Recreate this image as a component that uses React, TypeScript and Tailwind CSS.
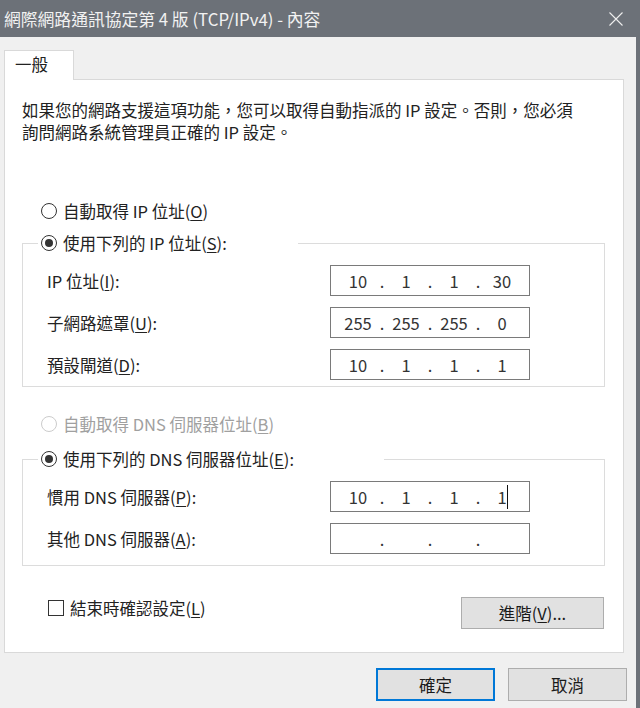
import React from 'react';

const FONT = { fontFamily: '"Noto Sans CJK TC", "Noto Sans", sans-serif' };

type AccProps = { pre: string; k: string; post?: string };

const Acc = ({ pre, k, post = '' }: AccProps) => (
  <span>
    {pre}(<u className="underline decoration-1 underline-offset-2">{k}</u>){post}
  </span>
);

const Radio = ({ checked, disabled }: { checked?: boolean; disabled?: boolean }) => (
  <span
    className={`w-[16px] h-[16px] rounded-full border flex items-center justify-center bg-white shrink-0 ${
      disabled ? 'border-[#cccccc]' : 'border-[#333333]'
    }`}
  >
    {checked && <span className="w-[8px] h-[8px] rounded-full bg-[#333333]" />}
  </span>
);

const IpBox = ({ octets, cursor }: { octets: string[]; cursor?: boolean }) => (
  <div className="w-[200px] h-[31px] border border-[#7a7a7a] bg-white flex items-center px-[9px] text-[16.5px] text-[#333333]">
    {octets.map((o, i) => (
      <React.Fragment key={i}>
        {i > 0 && <span className="w-[12px] text-center">.</span>}
        <span className="w-[36px] text-center relative">
          {o}
          {cursor && i === 3 && (
            <span className="absolute left-[23px] top-[-1px] w-px h-[24px] bg-[#111111]" />
          )}
        </span>
      </React.Fragment>
    ))}
  </div>
);

const Row = ({ label, octets, cursor }: { label: React.ReactNode; octets: string[]; cursor?: boolean }) => (
  <div className="flex items-center">
    <div className="w-[283px]">{label}</div>
    <IpBox octets={octets} cursor={cursor} />
  </div>
);

const Group = ({ legend, width, children }: { legend: React.ReactNode; width: string; children: React.ReactNode }) => (
  <fieldset className="ml-[17px] w-[583px] border border-[#dcdcdc] pl-[24px] pt-[11px]">
    <legend className={`-ml-[9px] pl-[3px] h-[22px] flex items-center gap-[6px] ${width}`}>
      <Radio checked />
      {legend}
    </legend>
    {children}
  </fieldset>
);

const Button = ({ children, primary, className = '' }: { children: React.ReactNode; primary?: boolean; className?: string }) => (
  <button
    className={`bg-[#e1e1e1] flex items-center justify-center text-[16.5px] text-[#1a1a1a] ${
      primary ? 'border-2 border-[#0078d7]' : 'border border-[#adadad]'
    } ${className}`}
  >
    {children}
  </button>
);

export default function App() {
  return (
    <div
      className="w-[640px] h-[708px] bg-[#f0f0f0] border-r-4 border-[#6c7178] flex flex-col overflow-hidden text-[16.5px] leading-[22px] text-[#222222]"
      style={FONT}
    >
      <div className="h-[37px] bg-[#6c7178] flex items-center justify-between pl-[4px] pr-[13px] text-[#f2f2f2] text-[16.8px]">
        <span>網際網路通訊協定第 4 版 (TCP/IPv4) - 內容</span>
        <svg width="14" height="14" viewBox="0 0 14 14">
          <path d="M0.5 0.5 L13.5 13.5 M13.5 0.5 L0.5 13.5" stroke="#eeeeee" strokeWidth="1.1" />
        </svg>
      </div>

      <div className="pl-[4px] pt-[13px]">
        <div className="w-[70px] h-[30px] bg-white border border-b-0 border-[#d9d9d9] -mb-px relative z-10 pl-[10px] pb-[4px] flex items-center">
          一般
        </div>
        <div className="w-[620px] h-[574px] bg-white border border-[#d9d9d9] flex flex-col">
          <p className="pl-[17px] pt-[19px] whitespace-nowrap">
            如果您的網路支援這項功能，您可以取得自動指派的 IP 設定。否則，您必須
            <br />
            詢問網路系統管理員正確的 IP 設定。
          </p>

          <div className="mt-[57px] pl-[36px] h-[22px] flex items-center gap-[6px]">
            <Radio />
            <Acc pre="自動取得 IP 位址" k="O" />
          </div>

          <div className="mt-[10px]">
            <Group legend={<Acc pre="使用下列的 IP 位址" k="S" post=":" />} width="w-[260px]">
              <div className="flex flex-col gap-[11px] pb-[6px]">
                <Row label={<Acc pre="IP 位址" k="I" post=":" />} octets={['10', '1', '1', '30']} />
                <Row label={<Acc pre="子網路遮罩" k="U" post=":" />} octets={['255', '255', '255', '0']} />
                <Row label={<Acc pre="預設閘道" k="D" post=":" />} octets={['10', '1', '1', '1']} />
              </div>
            </Group>
          </div>

          <div className="mt-[26px] pl-[36px] h-[22px] flex items-center gap-[6px] text-[#a0a0a0]">
            <Radio disabled />
            <Acc pre="自動取得 DNS 伺服器位址" k="B" />
          </div>

          <div className="mt-[13px]">
            <Group legend={<Acc pre="使用下列的 DNS 伺服器位址" k="E" post=":" />} width="w-[346px]">
              <div className="flex flex-col gap-[11px] pb-[11px]">
                <Row label={<Acc pre="慣用 DNS 伺服器" k="P" post=":" />} octets={['10', '1', '1', '1']} cursor />
                <Row label={<Acc pre="其他 DNS 伺服器" k="A" post=":" />} octets={['', '', '', '']} />
              </div>
            </Group>
          </div>

          <div className="mt-[31px] pl-[43px] pr-[19px] flex items-start justify-between">
            <div className="h-[22px] flex items-center gap-[6px]">
              <span className="w-[16px] h-[16px] border border-[#333333] bg-white" />
              <Acc pre="結束時確認設定" k="L" />
            </div>
            <Button className="w-[143px] h-[32px]">
              <Acc pre="進階" k="V" post="..." />
            </Button>
          </div>
        </div>
      </div>

      <div className="mt-[15px] flex justify-end gap-[13px] pr-[9px]">
        <Button primary className="w-[119px] h-[33px]">確定</Button>
        <Button className="w-[119px] h-[33px]">取消</Button>
      </div>
    </div>
  );
}
